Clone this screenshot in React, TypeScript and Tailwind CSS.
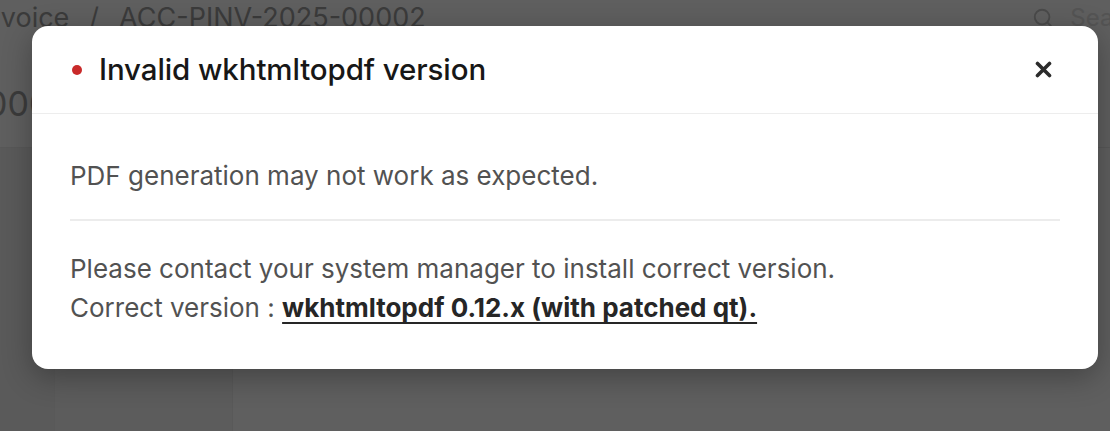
import React from 'react';

const PageBehind: React.FC = () => (
  <div className="flex h-[431px] w-full flex-col overflow-hidden bg-[#5f5f5f] text-[#3b3b3b]">
    <div className="flex h-[36px] items-center justify-between">
      <div className="ml-[-22px] flex items-center gap-[20px] text-[27px]">
        <span>Invoice</span>
        <span>/</span>
        <span>ACC-PINV-2025-00002</span>
      </div>
      <div className="mr-[-40px] flex items-center gap-[16px] text-[24px] text-[#545454]">
        <svg width="22" height="22" viewBox="0 0 24 24" fill="none" stroke="#4a4a4a" strokeWidth="2">
          <circle cx="11" cy="11" r="8" />
          <path d="m21 21-4.3-4.3" />
        </svg>
        <span>Search</span>
      </div>
    </div>
    <div className="flex h-[112px] items-start border-b border-[#585858] pt-[48px]">
      <span className="ml-[-14px] text-[34px] leading-[40px]">000</span>
    </div>
    <div className="flex flex-1">
      <div className="w-[54px] bg-[#5a5a5a]" />
      <div className="w-[179px] border-x border-[#595959] bg-[#5c5c5c]" />
      <div className="flex-1" />
    </div>
  </div>
);

const App: React.FC = () => {
  return (
    <div className="relative h-[431px] w-[1110px] overflow-hidden" style={{ fontFamily: 'Inter, "Noto Sans", sans-serif' }}>
      <PageBehind />
      <div className="absolute left-[32px] top-[26px] w-[1066px] rounded-[16px] bg-white shadow-[0_8px_30px_rgba(0,0,0,0.3)]">
        <div className="flex h-[88px] items-center justify-between border-b border-[#ededed] pl-[40px] pr-[45px]">
          <div className="flex items-center gap-[17px]">
            <span className="h-[10px] w-[10px] rounded-full bg-[#c92a2a]" />
            <h3 className="text-[29.5px] font-medium tracking-[-0.1px] text-[#171717]">Invalid wkhtmltopdf version</h3>
          </div>
          <button className="flex h-[20px] w-[20px] items-center justify-center text-[#2b2b2b]">
            <svg width="17" height="17" viewBox="0 0 17 17" fill="none" stroke="currentColor" strokeWidth="3.6" strokeLinecap="round">
              <path d="M2.5 2.5l12 12M14.5 2.5l-12 12" />
            </svg>
          </button>
        </div>
        <div className="px-[38px] pb-[42px] pt-[42px] text-[26px] leading-[39px] text-[#525252]">
          <p>PDF generation may not work as expected.</p>
          <hr className="mb-[28px] mt-[24px] border-t-2 border-[#ececec]" />
          <p>Please contact your system manager to install correct version.</p>
          <p>
            Correct version :{' '}
            <a className="font-bold text-[#262626] underline underline-offset-[5px]">wkhtmltopdf 0.12.x (with patched qt).</a>
          </p>
        </div>
      </div>
    </div>
  );
};

export default App;
